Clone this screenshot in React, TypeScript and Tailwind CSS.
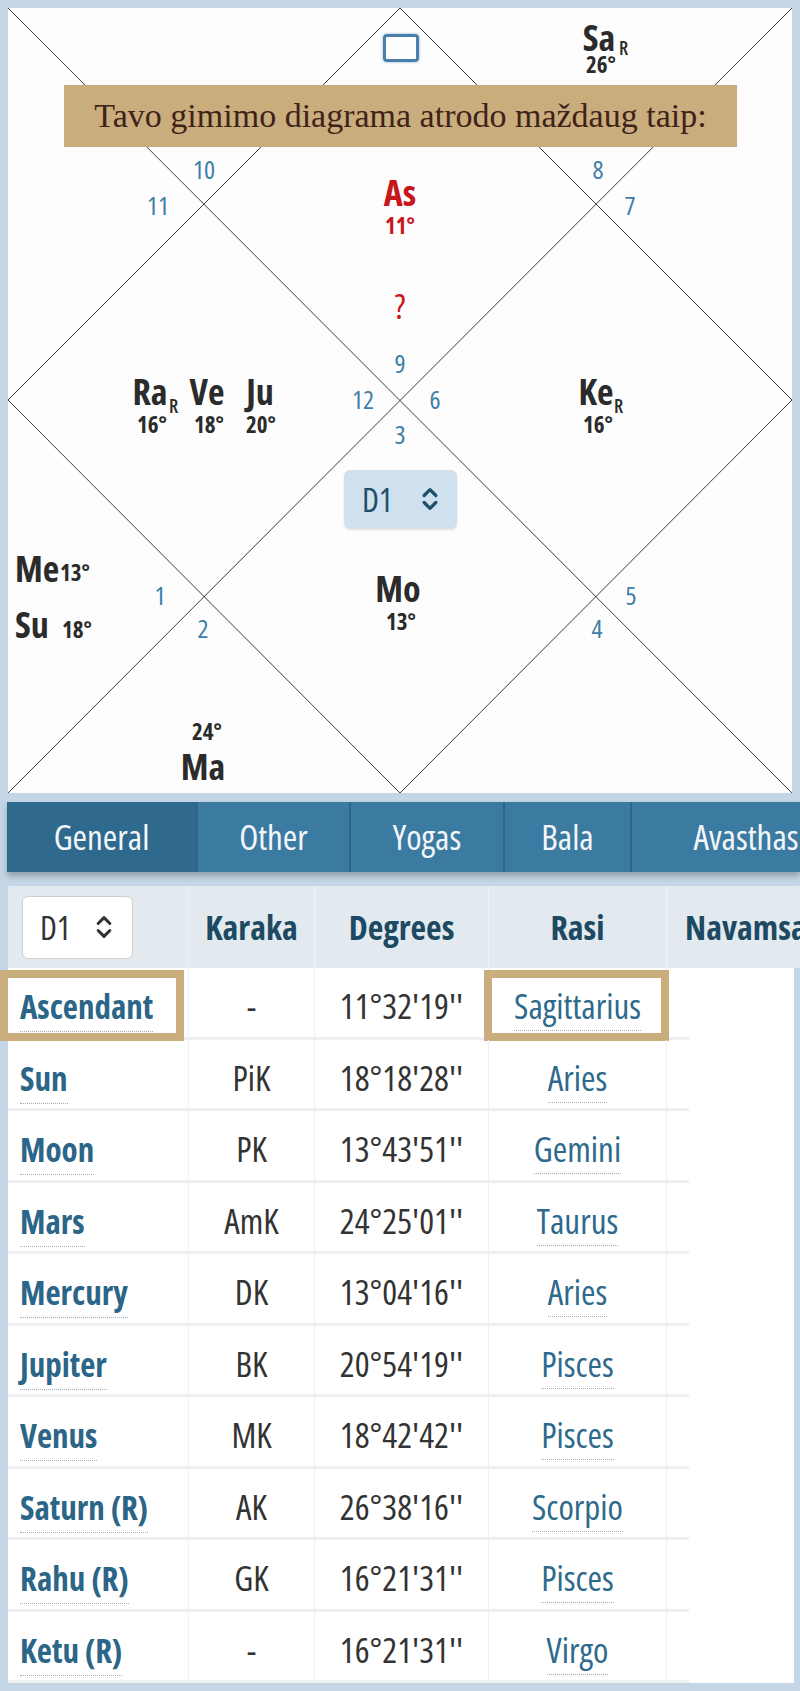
import { ChevronsUpDown } from 'lucide-react';
import clsx from 'clsx';

// Kordinates skaiciuojamos nuo diagramos kairio virsutinio kampo
const houses = [
    { n: '10', x: 196, y: 148 },
    { n: '11', x: 150, y: 184 },
    { n: '8', x: 590, y: 148 },
    { n: '7', x: 622, y: 184 },
    { n: '9', x: 392, y: 342 },
    { n: '12', x: 355, y: 378 },
    { n: '6', x: 427, y: 378 },
    { n: '3', x: 392, y: 413 },
    { n: '1', x: 152, y: 574 },
    { n: '2', x: 195, y: 607 },
    { n: '5', x: 623, y: 574 },
    { n: '4', x: 589, y: 607 },
];

type Planet = { name: string; x: number; y: number; deg?: string; dx?: number; dy?: number; r?: [number, number]; red?: boolean };

const planets: Planet[] = [
    { name: 'Sa', x: 591, y: 12, deg: '26°', dx: 593, dy: 45, r: [611, 31] },
    { name: 'As', x: 392, y: 167, deg: '11°', dx: 392, dy: 206, red: true },
    { name: 'Ra', x: 142, y: 366, deg: '16°', dx: 144, dy: 405, r: [161, 389] },
    { name: 'Ve', x: 199, y: 366, deg: '18°', dx: 201, dy: 405 },
    { name: 'Ju', x: 252, y: 366, deg: '20°', dx: 253, dy: 405 },
    { name: 'Ke', x: 588, y: 366, deg: '16°', dx: 590, dy: 405, r: [606, 389] },
    { name: 'Mo', x: 390, y: 563, deg: '13°', dx: 393, dy: 602 },
    { name: 'Ma', x: 195, y: 741, deg: '24°', dx: 199, dy: 712 },
];

const rows = [
    { name: 'Ascendant', karaka: '-', deg: "11°32'19''", rasi: 'Sagittarius' },
    { name: 'Sun', karaka: 'PiK', deg: "18°18'28''", rasi: 'Aries' },
    { name: 'Moon', karaka: 'PK', deg: "13°43'51''", rasi: 'Gemini' },
    { name: 'Mars', karaka: 'AmK', deg: "24°25'01''", rasi: 'Taurus' },
    { name: 'Mercury', karaka: 'DK', deg: "13°04'16''", rasi: 'Aries' },
    { name: 'Jupiter', karaka: 'BK', deg: "20°54'19''", rasi: 'Pisces' },
    { name: 'Venus', karaka: 'MK', deg: "18°42'42''", rasi: 'Pisces' },
    { name: 'Saturn (R)', karaka: 'AK', deg: "26°38'16''", rasi: 'Scorpio' },
    { name: 'Rahu (R)', karaka: 'GK', deg: "16°21'31''", rasi: 'Pisces' },
    { name: 'Ketu (R)', karaka: '-', deg: "16°21'31''", rasi: 'Virgo' },
];

const tabs = [
    { label: 'General', w: 'w-[191px]', active: true },
    { label: 'Other', w: 'w-[153px]' },
    { label: 'Yogas', w: 'w-[154px]' },
    { label: 'Bala', w: 'w-[127px]' },
    { label: 'Avasthas', w: 'w-[230px]' },
];

function Label({ x, y, className, children }: { x: number; y: number; className?: string; children: React.ReactNode }) {
    return (
        <div className={clsx('absolute -translate-x-1/2 leading-none whitespace-nowrap', className)} style={{ left: x, top: y }}>
            {children}
        </div>
    );
}

function Chart() {
    return (
        <div className="relative w-[784px] h-[785px] bg-[#fdfdfd]">
            <svg className="absolute inset-0" width="784" height="785" viewBox="0 0 784 785">
                <g stroke="#3c3c3c" strokeWidth="1" fill="none">
                    <line x1="0" y1="0" x2="784" y2="785" />
                    <line x1="784" y1="0" x2="0" y2="785" />
                    <polygon points="392,0 784,392 392,785 0,392" />
                </g>
            </svg>

            {houses.map((h) => (
                <Label key={h.n} x={h.x} y={h.y} className="text-[26px] text-[#3e7fa8]">
                    {h.n}
                </Label>
            ))}

            {planets.map((p) => (
                <div key={p.name}>
                    <Label x={p.x} y={p.y} className={clsx('text-[36px] font-bold', p.red ? 'text-[#c8161d]' : 'text-[#2b2b2b]')}>
                        {p.name}
                    </Label>
                    {p.deg && (
                        <Label x={p.dx!} y={p.dy!} className={clsx('text-[23px] font-bold', p.red ? 'text-[#c8161d]' : 'text-[#2b2b2b]')}>
                            {p.deg}
                        </Label>
                    )}
                    {p.r && (
                        <div className="absolute text-[19px] font-semibold leading-none text-[#2b2b2b]" style={{ left: p.r[0], top: p.r[1] }}>
                            R
                        </div>
                    )}
                </div>
            ))}

            <Label x={392} y={280} className="text-[35px] text-[#c8161d]">
                ?
            </Label>

            {/* Me ir Su stovi prie kairio krasto */}
            <div className="absolute left-[7px] top-[543px] text-[36px] font-bold leading-none text-[#2b2b2b]">Me</div>
            <div className="absolute left-[52px] top-[553px] text-[23px] font-bold leading-none text-[#2b2b2b]">13°</div>
            <div className="absolute left-[7px] top-[599px] text-[36px] font-bold leading-none text-[#2b2b2b]">Su</div>
            <div className="absolute left-[54px] top-[610px] text-[23px] font-bold leading-none text-[#2b2b2b]">18°</div>

            <div className="absolute left-[375px] top-[26px] w-[36px] h-[28px] rounded-[4px] border-[3px] border-[#4a7fab] shadow-[0_0_3px_rgba(74,127,171,0.6)]" />

            <div className="absolute left-[56px] top-[77px] w-[673px] h-[62px] bg-[#c9ad7c] flex items-center justify-center">
                <span className="font-['Liberation_Serif',serif] text-[34px] text-[#3f2219] leading-none">
                    Tavo gimimo diagrama atrodo maždaug taip:
                </span>
            </div>

            <div className="absolute left-[336px] top-[462px] w-[113px] h-[58px] bg-[#cfe1ee] rounded-md shadow-[0_2px_2px_rgba(0,0,0,0.12)] flex items-center justify-between pl-[18px] pr-[13px] text-[#1f4e6a]">
                <span className="text-[33px] leading-none">D1</span>
                <ChevronsUpDown size={28} strokeWidth={2.8} />
            </div>
        </div>
    );
}

export default function App() {
    return (
        <div className="w-[800px] h-[1691px] overflow-hidden bg-[#c4d6e5] font-['Open_Sans',sans-serif] [font-stretch:75%]">
            <div className="pt-[8px] pl-[8px]">
                <Chart />
            </div>

            {/* Korteles */}
            <div className="mt-[9px] ml-[7px] h-[70px] flex bg-[#3b7ba2] shadow-[0_4px_6px_rgba(0,0,0,0.25)] whitespace-nowrap">
                {tabs.map((t) => (
                    <div
                        key={t.label}
                        className={clsx(
                            'shrink-0 h-full flex items-center justify-center text-[35px] text-[#f3f6f9] border-r-2 border-[#2d6689]',
                            t.w,
                            t.active ? 'bg-[#2f6a8e]' : 'bg-[#3b7ba2]'
                        )}
                    >
                        {t.label}
                    </div>
                ))}
            </div>

            {/* Lentele */}
            <div className="mt-[14px] pl-[8px]">
                <div className="h-[82px] w-[792px] bg-[#e2eaf0] grid grid-cols-[181px_126px_174px_178px_1fr] text-[34px] font-bold text-[#1d4a62]">
                    <div className="flex items-center pl-[14px] border-r border-[#eef3f7]">
                        <div className="w-[111px] h-[63px] bg-white border border-[#cfcfcf] rounded-md flex items-center justify-between pl-[17px] pr-[14px] text-[#333] font-normal">
                            <span className="text-[33px] leading-none">D1</span>
                            <ChevronsUpDown size={28} strokeWidth={2.6} />
                        </div>
                    </div>
                    <div className="flex items-center justify-center border-r border-[#eef3f7]">Karaka</div>
                    <div className="flex items-center justify-center border-r border-[#eef3f7]">Degrees</div>
                    <div className="flex items-center justify-center border-r border-[#eef3f7]">Rasi</div>
                    <div className="flex items-center pl-[18px]">Navamsa</div>
                </div>

                <div className="w-[786px] bg-white">
                    {rows.map((r, i) => (
                        <div key={r.name} className="relative h-[71.5px] grid grid-cols-[181px_126px_174px_178px_22px] text-[35px] leading-[30px]">
                            <div className="pt-[23px] pl-[12px] border-b-[3px] border-r border-[#edf0f2]">
                                <span className="inline-block text-[33px] font-bold text-[#2b6587] border-b border-dotted border-[#9fb0bb] pb-[9px]">{r.name}</span>
                            </div>
                            <div className="pt-[23px] text-center text-[#333] border-b-[3px] border-r border-[#edf0f2]">{r.karaka}</div>
                            <div className="pt-[23px] text-center text-[#333] border-b-[3px] border-r border-[#edf0f2]">{r.deg}</div>
                            <div className="pt-[23px] text-center border-b-[3px] border-r border-[#edf0f2]">
                                <span className="inline-block text-[#2e6a8c] border-b border-dotted border-[#9fb0bb] pb-[9px]">{r.rasi}</span>
                            </div>
                            <div className="border-b-[3px] border-[#edf0f2]" />
                            {i === 0 && (
                                <>
                                    <div className="absolute left-[-8px] top-[2px] w-[184px] h-[71px] border-[8px] border-[#c9ad7c]" />
                                    <div className="absolute left-[476px] top-[2px] w-[185px] h-[71px] border-[8px] border-[#c9ad7c]" />
                                </>
                            )}
                        </div>
                    ))}
                </div>
            </div>
        </div>
    );
}
